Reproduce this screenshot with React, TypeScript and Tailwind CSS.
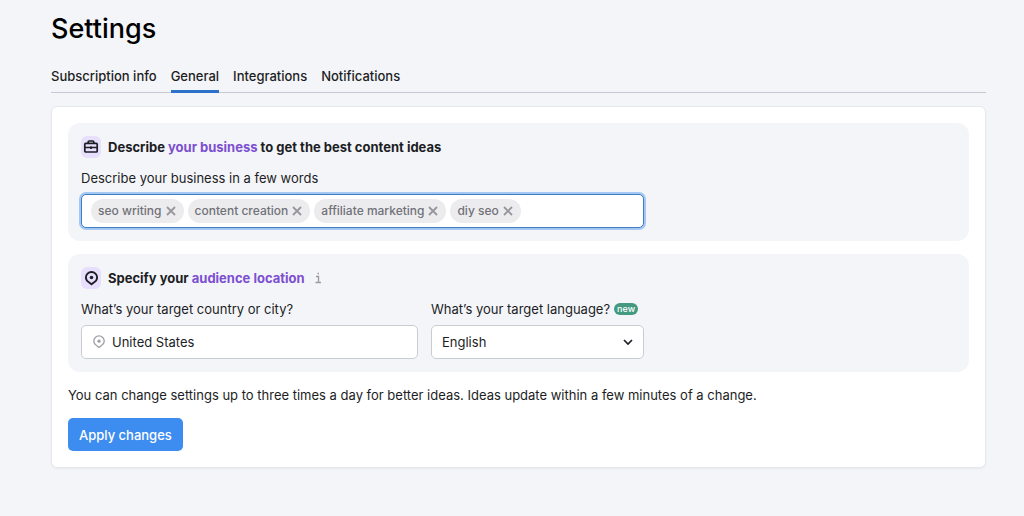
import { useState } from 'react';

const tabs = ['Subscription info', 'General', 'Integrations', 'Notifications'];

function PinIcon({ className, strokeWidth = 2 }: { className: string; strokeWidth?: number }) {
  return (
    <svg viewBox="0 0 16 16" fill="none" stroke="currentColor" strokeWidth={strokeWidth} strokeLinejoin="round" className={className} aria-hidden="true">
      <path d="M8 14.2 5.2 12A6 6 0 0 1 2 7a6 6 0 0 1 12 0 6 6 0 0 1-3.2 5Z" />
      <circle cx="8" cy="7" r="1.9" fill="currentColor" stroke="none" />
    </svg>
  );
}

function BriefcaseIcon() {
  return (
    <svg viewBox="0 0 16 16" fill="none" stroke="currentColor" strokeWidth="1.7" strokeLinejoin="round" className="size-4" aria-hidden="true">
      <rect x="1.8" y="4.3" width="12.4" height="8.7" rx="1" />
      <path d="M5.2 4.3V3a1 1 0 0 1 1-1h3.6a1 1 0 0 1 1 1v1.3M1.8 8.5h12.4M8 7.3v2.6" />
    </svg>
  );
}

export default function App() {
  const [active, setActive] = useState('General');
  const [tags, setTags] = useState(['seo writing', 'content creation', 'affiliate marketing', 'diy seo']);
  const [draft, setDraft] = useState('');
  const [location, setLocation] = useState('United States');
  const [language, setLanguage] = useState('English');

  const addTag = (e: any) => {
    if (e.key === 'Enter' && draft.trim()) {
      e.preventDefault();
      setTags(prev => [...prev, draft.trim()]);
      setDraft('');
    }
  };

  return (
    <div className="min-h-screen bg-[#f4f5f9] pt-2 pr-[38px] pb-12 pl-[51px] font-['Inter',sans-serif] text-[13px] leading-5 text-[#1c1e24]">
      <h1 className="text-[27px] leading-[42px] font-medium text-black">Settings</h1>

      <nav className="mt-[10px] flex gap-[14px] border-b border-[#c6c9d3]">
        {tabs.map(tab => (
          <button
            key={tab}
            onClick={() => setActive(tab)}
            className={tab === active
              ? '-mb-px h-[33px] border-b-3 border-[#2b72c8] pt-[6px] pb-1 font-medium'
              : '-mb-px h-[33px] border-b-3 border-transparent pt-[6px] pb-1 font-medium'}
          >
            {tab}
          </button>
        ))}
      </nav>

      <form
        onSubmit={e => e.preventDefault()}
        className="mt-[13px] flex flex-col items-start gap-[13px] rounded-md border border-[#e7e8ed] bg-white p-4 shadow-xs"
      >
        <section className="w-full rounded-xl bg-[#f4f5f9] p-[13px]">
          <h2 className="flex items-center gap-[7px] font-bold">
            <span className="flex h-[22px] w-5 items-center justify-center rounded-md bg-[#e8dffc]">
              <BriefcaseIcon />
            </span>
            <span>Describe <span className="text-[#7c4fd0]">your business</span> to get the best content ideas</span>
          </h2>
          <label htmlFor="business" className="mt-[10px] block">Describe your business in a few words</label>
          <div className="mt-[6px] flex h-[34px] max-w-[563px] items-center gap-1 rounded-[5px] border border-[#3f7cc4] bg-white px-[9px] ring-2 ring-[#a5c8f3]">
            {tags.map(tag => (
              <span key={tag} className="flex h-6 shrink-0 items-center gap-[3px] rounded-full bg-[#ececee] px-[7px] text-xs font-medium text-[#717279]">
                {tag}
                <button type="button" aria-label={`Remove ${tag}`} onClick={() => setTags(tags.filter(t => t !== tag))}>
                  <svg viewBox="0 0 12 12" stroke="#96979d" strokeWidth="1.8" className="size-3">
                    <path d="m2 2 8 8M10 2l-8 8" />
                  </svg>
                </button>
              </span>
            ))}
            <input
              id="business"
              value={draft}
              onChange={e => setDraft(e.target.value)}
              onKeyDown={addTag}
              className="min-w-0 flex-1 bg-transparent outline-none"
            />
          </div>
        </section>

        <section className="w-full rounded-xl bg-[#f4f5f9] p-[13px]">
          <h2 className="flex items-center gap-[7px] font-bold">
            <span className="flex h-[22px] w-5 items-center justify-center rounded-md bg-[#e8dffc]">
              <PinIcon className="size-[15px]" />
            </span>
            <span>Specify your <span className="text-[#7c4fd0]">audience location</span></span>
            <svg viewBox="0 0 12 12" fill="none" stroke="#9a9ca5" strokeWidth="1.4" className="size-3" aria-hidden="true">
              <path d="M4 4.5h2.5v6M3.5 10.5H9M5.5 1.5H7" />
            </svg>
          </h2>
          <div className="mt-[10px] flex gap-[13px]">
            <div className="w-full max-w-[337px]">
              <label htmlFor="location" className="block">What’s your target country or city?</label>
              <div className="mt-[6px] flex h-[34px] items-center gap-[6px] rounded-[5px] border border-[#caccd3] bg-white px-[10px]">
                <PinIcon className="size-[14px] shrink-0 text-[#9fa0a6]" strokeWidth={1.5} />
                <input
                  id="location"
                  value={location}
                  onChange={e => setLocation(e.target.value)}
                  className="min-w-0 flex-1 bg-transparent outline-none"
                />
              </div>
            </div>
            <div className="w-full max-w-[213px]">
              <div className="flex items-center gap-1 whitespace-nowrap">
                <label htmlFor="language">What’s your target language?</label>
                <span className="flex h-3 items-center rounded-full bg-[#449a80] px-[3px] text-[9px] font-medium text-white">new</span>
              </div>
              <div className="mt-[6px] grid items-center">
                <select
                  id="language"
                  value={language}
                  onChange={e => setLanguage(e.target.value)}
                  className="col-start-1 row-start-1 h-[34px] w-full appearance-none rounded-[5px] border border-[#caccd3] bg-white px-[10px]"
                >
                  <option>English</option>
                  <option>Spanish</option>
                  <option>French</option>
                </select>
                <svg viewBox="0 0 12 12" fill="none" stroke="#1c1e24" strokeWidth="1.7" className="pointer-events-none col-start-1 row-start-1 mr-[10px] size-3 justify-self-end" aria-hidden="true">
                  <path d="m2 4 4 4 4-4" />
                </svg>
              </div>
            </div>
          </div>
        </section>

        <p>You can change settings up to three times a day for better ideas. Ideas update within a few minutes of a change.</p>
        <button type="submit" className="h-[33px] rounded-[5px] bg-[#3d8df0] px-[11px] font-medium text-white">Apply changes</button>
      </form>
    </div>
  );
}
